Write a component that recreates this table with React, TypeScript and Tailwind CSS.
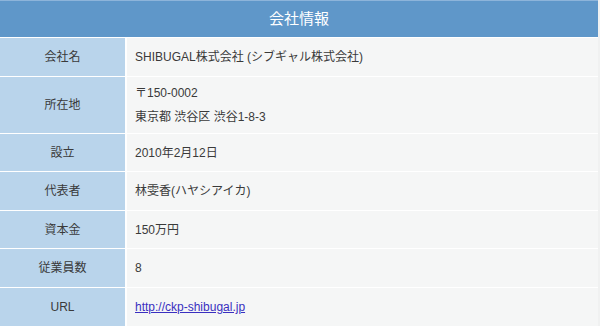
import React from 'react';

const rows: { label: string; h: string; value: React.ReactNode }[] = [
  { label: '会社名', h: 'h-[38px]', value: 'SHIBUGAL株式会社 (シブギャル株式会社)' },
  {
    label: '所在地',
    h: 'h-[56px]',
    value: (
      <div className="flex flex-col gap-[6px]">
        <span>〒150-0002</span>
        <span>東京都 渋谷区 渋谷1-8-3</span>
      </div>
    ),
  },
  { label: '設立', h: 'h-[37px]', value: '2010年2月12日' },
  { label: '代表者', h: 'h-[38px]', value: '林雯香(ハヤシアイカ)' },
  { label: '資本金', h: 'h-[37px]', value: '150万円' },
  { label: '従業員数', h: 'h-[38px]', value: '8' },
  {
    label: 'URL',
    h: 'h-[38px]',
    value: (
      <a href="#" className="text-[#3a2fc0] underline">
        http://ckp-shibugal.jp
      </a>
    ),
  },
];

export default function App() {
  return (
    <div className="h-[326px] w-[600px] overflow-hidden bg-[#f0f1f1] font-['Liberation_Sans','Noto_Sans_CJK_JP',sans-serif] text-[12px] text-[#3a3a3a]">
      <div className="flex w-[598px] flex-col gap-px bg-white">
        {/* 見出し */}
        <div className="flex h-[37px] items-center justify-center border-t border-[#8db4da] bg-[#5f97c9] text-[15px] text-white">
          会社情報
        </div>

        {rows.map((row) => (
          <div key={row.label} className={`flex gap-[2px] ${row.h}`}>
            <div className="flex w-[125px] shrink-0 items-center justify-center bg-[#b9d4eb]">
              {row.label}
            </div>
            <div className="flex flex-1 items-center bg-[#f5f6f6] pl-[8px]">{row.value}</div>
          </div>
        ))}
      </div>
    </div>
  );
}
